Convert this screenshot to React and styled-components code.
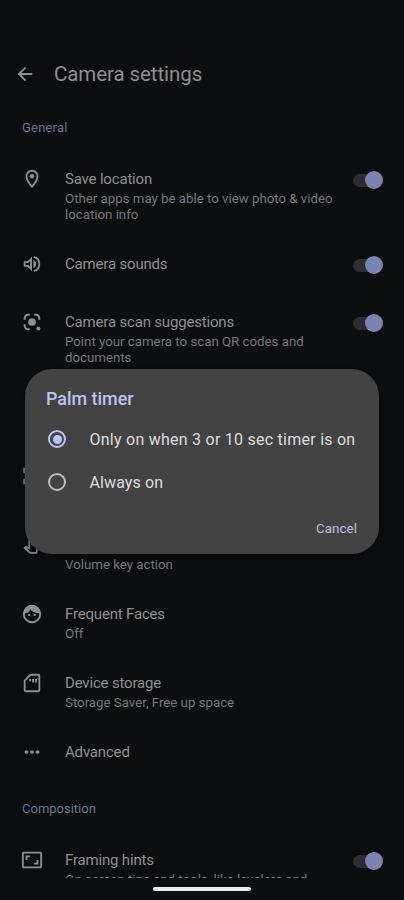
import React from "react";
import styled, { createGlobalStyle } from "styled-components";
import {
  MdArrowBack,
  MdOutlineLocationOn,
  MdMoreHoriz,
  MdOutlineAspectRatio,
} from "react-icons/md";

const SoundIcon = () => (
  <svg width="22" height="22" viewBox="0 0 24 24" fill="none" stroke="currentColor" strokeWidth="2">
    <path d="M4 10h3.6L11 6.6v10.8L7.6 14H4z" />
    <path d="M13.5 7.6c2 .8 3.1 2.5 3.1 4.4s-1.1 3.6-3.1 4.4z" fill="currentColor" stroke="none" />
    <path d="M14 4.2c3.6.9 6 4.1 6 7.8s-2.4 6.9-6 7.8" />
  </svg>
);

const LensIcon = () => (
  <svg width="22" height="22" viewBox="0 0 24 24" fill="none" stroke="currentColor" strokeWidth="2.2">
    <path d="M4 9.5V8a4 4 0 0 1 4-4h1.500M14.500 4H16a4 4 0 0 1 4 4v1.500M4 14.500V16a4 4 0 0 0 4 4h1.500" />
    <circle cx="12" cy="12" r="4.2" fill="currentColor" stroke="none" />
    <circle cx="19" cy="19" r="2.2" fill="currentColor" stroke="none" />
  </svg>
);

const FrameIcon = () => (
  <svg width="22" height="22" viewBox="0 0 24 24" fill="none" stroke="currentColor" strokeWidth="2">
    <path d="M3.500 9V4h5M15 4h5v5M3.500 15v5h5M20 15v5h-5" />
  </svg>
);

const HandIcon = () => (
  <svg width="22" height="22" viewBox="0 0 24 24" fill="none" stroke="currentColor" strokeWidth="1.9">
    <path d="M9 15.500V5.500a1.500 1.500 0 0 1 3 0V11l6 2.500-1 7h-7l-6-5.300 1.500-1.200z" />
  </svg>
);

const FaceIcon = () => (
  <svg width="22" height="22" viewBox="0 0 24 24" fill="currentColor">
    <circle cx="12" cy="12" r="9" fill="none" stroke="currentColor" strokeWidth="2" />
    <path d="M3 11.8C6.500 11.500 9 9.800 10.200 7.200c2.400 3 6 4.400 10.800 3.600C20.500 6 16.800 2.500 12 2.500S3.200 6.500 3 11.8z" />
    <circle cx="9" cy="13" r="1.3" />
    <circle cx="15" cy="13" r="1.3" />
  </svg>
);

const StorageIcon = () => (
  <svg width="22" height="22" viewBox="0 0 24 24" fill="none" stroke="currentColor" strokeWidth="2">
    <path d="M10.300 3H19q1 0 1 1v16q0 1-1 1H5q-1 0-1-1V9.300z" strokeLinejoin="round" />
    <path d="M10 7.500v2.500M13.200 7.500v4M16.400 7.500v4" strokeWidth="2" />
  </svg>
);

const items = [
  {
    icon: <MdOutlineLocationOn />,
    title: "Save location",
    text: "Other apps may be able to view photo & video\nlocation info",
    toggle: true,
  },
  { icon: <SoundIcon />, title: "Camera sounds", toggle: true },
  {
    icon: <LensIcon />,
    title: "Camera scan suggestions",
    text: "Point your camera to scan QR codes and\ndocuments",
    toggle: true,
  },
  { icon: null, tall: true },
  { icon: <FrameIcon />, tall: true },
  { icon: <HandIcon />, text: "Volume key action" },
  { icon: <FaceIcon />, title: "Frequent Faces", text: "Off" },
  {
    icon: <StorageIcon />,
    title: "Device storage",
    text: "Storage Saver, Free up space",
  },
  { icon: <MdMoreHoriz />, title: "Advanced" },
];

const SettingRow = ({ icon, title, text, toggle, tall }) => (
  <Row $single={!text} $tall={tall}>
    <IconSlot>{icon}</IconSlot>
    <RowBody>
      <RowTitle>{title}</RowTitle>
      {text && <RowText>{text}</RowText>}
    </RowBody>
    {toggle && (
      <Switch role="switch" aria-checked="true" aria-label={title}>
        <Knob />
      </Switch>
    )}
  </Row>
);

const App = () => {
  return (
    <>
      <GlobalStyle />
      <Screen>
        <Header>
          <MdArrowBack size={22} />
          <Heading>Camera settings</Heading>
        </Header>
        <List>
          <Section>General</Section>
          {items.map((item, i) => (
            <SettingRow key={i} {...item} />
          ))}
          <Section $second>Composition</Section>
          <SettingRow
            icon={<MdOutlineAspectRatio />}
            title="Framing hints"
            text="On-screen tips and tools, like levelers and"
            toggle
          />
        </List>
        <NavBar>
          <Handle />
        </NavBar>
        <Dialog role="dialog" aria-label="Palm timer">
          <DialogTitle>Palm timer</DialogTitle>
          <Option>
            <Radio $checked />
            <OptionLabel $spacing="0.25px">Only on when 3 or 10 sec timer is on</OptionLabel>
          </Option>
          <Option>
            <Radio />
            <OptionLabel>Always on</OptionLabel>
          </Option>
          <Cancel>Cancel</Cancel>
        </Dialog>
      </Screen>
    </>
  );
};

export default App;

const GlobalStyle = createGlobalStyle`
  * {
    box-sizing: border-box;
  }
  body {
    margin: 0;
    background: #0d0e10;
    font-family: Roboto, "Liberation Sans", sans-serif;
  }
`;

const Screen = styled.div`
  position: relative;
  display: flex;
  flex-direction: column;
  width: 404px;
  height: 900px;
  overflow: hidden;
  background: #0d0e10;
  color: #8f8f92;
`;

const Header = styled.header`
  display: flex;
  align-items: center;
  height: 68px;
  margin-top: 40px;
  padding: 0 14px;
  flex-shrink: 0;
`;

const Heading = styled.h1`
  margin: 0 0 0 18px;
  font-size: 20.5px;
  font-weight: 400;
  line-height: 28px;
  letter-spacing: -0.08px;
`;

const List = styled.main`
  height: 770px;
  overflow: hidden;
  flex-shrink: 0;
`;

const Section = styled.h2`
  margin: 0;
  padding: ${({ $second }) => ($second ? "15px 22px 15px" : "10px 22px 15px")};
  font-size: 13px;
  font-weight: 400;
  line-height: 20px;
  color: #6c7494;
  letter-spacing: ${({ $second }) => ($second ? "0px" : "0.2px")};
`;

const Row = styled.div`
  display: flex;
  align-items: flex-start;
  height: ${({ $tall }) => ($tall ? "69px" : "auto")};
  padding: ${({ $single }) => ($single ? "16px 21px 22px" : "16px 21px 15.5px")};
`;

const IconSlot = styled.span`
  display: flex;
  align-items: center;
  justify-content: center;
  width: 22px;
  height: 20px;
  margin-right: 22px;
  font-size: 22px;
  flex-shrink: 0;

  svg {
    flex-shrink: 0;
  }
`;

const RowBody = styled.div`
  flex: 1;
`;

const RowTitle = styled.div`
  min-height: 20px;
  font-size: 15px;
  line-height: 20px;
  letter-spacing: -0.18px;
`;

const RowText = styled.div`
  margin-top: 1.5px;
  font-size: 13.3px;
  line-height: 16px;
  color: #77777a;
  letter-spacing: -0.02px;
  white-space: pre;
`;

const Switch = styled.span`
  display: flex;
  align-items: center;
  justify-content: flex-end;
  width: 30px;
  height: 13px;
  margin-top: 4.5px;
  border-radius: 7px;
  background: #2d2d35;
`;

const Knob = styled.span`
  width: 18px;
  height: 18px;
  border-radius: 50%;
  background: #7b85b3;
  flex-shrink: 0;
`;

const NavBar = styled.div`
  display: flex;
  justify-content: center;
  padding-top: 9px;
`;

const Handle = styled.span`
  width: 98px;
  height: 4px;
  border-radius: 2px;
  background: #eeeeee;
`;

const Dialog = styled.section`
  position: absolute;
  top: 369px;
  left: 25px;
  display: flex;
  flex-direction: column;
  width: 354px;
  height: 185px;
  padding: 19.5px 22px 0 21px;
  border-radius: 27px;
  background: #434344;
  box-shadow: 0 2px 8px rgba(0, 0, 0, 0.5);
`;

const DialogTitle = styled.h3`
  margin: 0 0 9px;
  font-size: 17.9px;
  font-weight: 500;
  line-height: 20px;
  color: #bcc4f0;
`;

const Option = styled.label`
  display: flex;
  align-items: center;
  height: 43px;
`;

const Radio = styled.span`
  display: flex;
  align-items: center;
  justify-content: center;
  width: 18px;
  height: 18px;
  margin: 0 23.5px 0 2px;
  border: 2px solid ${({ $checked }) => ($checked ? "#bcc4f2" : "#bdbdbd")};
  border-radius: 50%;

  &::after {
    content: "";
    width: 9px;
    height: 9px;
    border-radius: 50%;
    background: ${({ $checked }) => ($checked ? "#bcc4f8" : "none")};
  }
`;

const OptionLabel = styled.span`
  font-size: 16px;
  letter-spacing: ${({ $spacing }) => $spacing || "0.1px"};
  color: #dededf;
`;

const Cancel = styled.button`
  align-self: flex-end;
  margin-top: 15.5px;
  padding: 0;
  border: none;
  background: none;
  font-family: inherit;
  font-size: 13.3px;
  font-weight: 400;
  line-height: 20px;
  letter-spacing: 0.1px;
  color: #b9c0ea;
`;
